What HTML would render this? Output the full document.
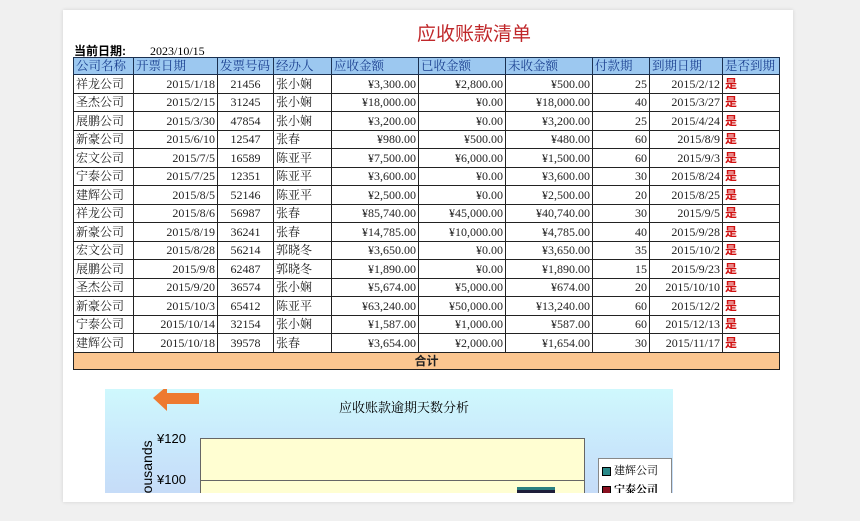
<!DOCTYPE html>
<html><head><meta charset="utf-8"><style>
body{margin:0;width:860px;height:521px;background:#f0f0f0;position:relative;overflow:hidden;font-family:"Liberation Serif","Noto Serif CJK SC",serif;}
.card{position:absolute;left:63px;top:10px;width:730px;height:492px;background:#fff;box-shadow:0 0 4px rgba(0,0,0,.12);}
.title{position:absolute;left:0;width:860px;top:19px;text-align:center;color:#c0282b;font-size:19px;font-family:"Liberation Sans","Noto Sans CJK SC",sans-serif;padding-left:88px;box-sizing:border-box;}
.date{position:absolute;left:74px;top:42px;font-size:12px;}
.date b{font-family:"Liberation Sans","Noto Sans CJK SC",sans-serif;}
table{position:absolute;left:73px;top:57px;border-collapse:collapse;table-layout:fixed;width:706px;font-size:12px;}
td{border:1px solid #222;padding:0 2px;height:17.5px;line-height:16px;white-space:nowrap;overflow:hidden;color:#222;}
tr.h td{background:#9cc8f0;color:#1a3f8f;height:16px;font-size:12.5px;border-color:#1a3050;}
.r{text-align:right}.c{text-align:center}
.y{color:#d01010;font-weight:bold;font-family:"Liberation Sans","Noto Sans CJK SC",sans-serif;}
tr.t td{background:#fbc690;text-align:center;font-weight:bold;font-family:"Liberation Sans","Noto Sans CJK SC",sans-serif;height:16px;}
.chart{position:absolute;left:105px;top:389px;width:568px;height:104px;background:linear-gradient(#cff8fd,#c8e6fb 60%,#c6dcf8);overflow:hidden;}
.plot{position:absolute;left:95px;top:49px;width:383px;height:70px;background:#fffed2;border:1px solid #666;}
.grid{position:absolute;left:0;right:0;top:41px;border-top:1px solid #666;}
.bar{position:absolute;left:316px;top:48px;width:38px;height:10px;background:#1e1e3a;border-top:3px solid #2a7f80;}
.ct{position:absolute;left:0;width:100%;top:8px;text-align:center;font-size:13px;padding-left:30px;box-sizing:border-box;}
.yl{position:absolute;font-family:"Liberation Sans",sans-serif;font-size:13px;left:52px;}
.leg{position:absolute;left:493px;top:69px;width:72px;height:40px;background:#fff;border:1px solid #888;font-size:11px;}
.sq{display:inline-block;width:7px;height:7px;border:1px solid #000;margin:0 3px 0 3px;vertical-align:middle}
</style></head><body>
<div class="card"></div>
<div class="title">应收账款清单</div>
<div class="date"><b>当前日期:</b>&nbsp;&nbsp;&nbsp;&nbsp;&nbsp;&nbsp;&nbsp;&nbsp;2023/10/15</div>
<table>
<colgroup><col style="width:60px"><col style="width:84px"><col style="width:56px"><col style="width:58px"><col style="width:87px"><col style="width:87px"><col style="width:87px"><col style="width:57px"><col style="width:73px"><col style="width:57px"></colgroup>
<tr class="h"><td>公司名称</td><td>开票日期</td><td>发票号码</td><td>经办人</td><td>应收金额</td><td>已收金额</td><td>未收金额</td><td>付款期</td><td>到期日期</td><td>是否到期</td></tr>
<tr><td>祥龙公司</td><td class="r">2015/1/18</td><td class="c">21456</td><td>张小娴</td><td class="r">¥3,300.00</td><td class="r">¥2,800.00</td><td class="r">¥500.00</td><td class="r">25</td><td class="r">2015/2/12</td><td class="y">是</td></tr>
<tr><td>圣杰公司</td><td class="r">2015/2/15</td><td class="c">31245</td><td>张小娴</td><td class="r">¥18,000.00</td><td class="r">¥0.00</td><td class="r">¥18,000.00</td><td class="r">40</td><td class="r">2015/3/27</td><td class="y">是</td></tr>
<tr><td>展鹏公司</td><td class="r">2015/3/30</td><td class="c">47854</td><td>张小娴</td><td class="r">¥3,200.00</td><td class="r">¥0.00</td><td class="r">¥3,200.00</td><td class="r">25</td><td class="r">2015/4/24</td><td class="y">是</td></tr>
<tr><td>新豪公司</td><td class="r">2015/6/10</td><td class="c">12547</td><td>张春</td><td class="r">¥980.00</td><td class="r">¥500.00</td><td class="r">¥480.00</td><td class="r">60</td><td class="r">2015/8/9</td><td class="y">是</td></tr>
<tr><td>宏文公司</td><td class="r">2015/7/5</td><td class="c">16589</td><td>陈亚平</td><td class="r">¥7,500.00</td><td class="r">¥6,000.00</td><td class="r">¥1,500.00</td><td class="r">60</td><td class="r">2015/9/3</td><td class="y">是</td></tr>
<tr><td>宁泰公司</td><td class="r">2015/7/25</td><td class="c">12351</td><td>陈亚平</td><td class="r">¥3,600.00</td><td class="r">¥0.00</td><td class="r">¥3,600.00</td><td class="r">30</td><td class="r">2015/8/24</td><td class="y">是</td></tr>
<tr><td>建辉公司</td><td class="r">2015/8/5</td><td class="c">52146</td><td>陈亚平</td><td class="r">¥2,500.00</td><td class="r">¥0.00</td><td class="r">¥2,500.00</td><td class="r">20</td><td class="r">2015/8/25</td><td class="y">是</td></tr>
<tr><td>祥龙公司</td><td class="r">2015/8/6</td><td class="c">56987</td><td>张春</td><td class="r">¥85,740.00</td><td class="r">¥45,000.00</td><td class="r">¥40,740.00</td><td class="r">30</td><td class="r">2015/9/5</td><td class="y">是</td></tr>
<tr><td>新豪公司</td><td class="r">2015/8/19</td><td class="c">36241</td><td>张春</td><td class="r">¥14,785.00</td><td class="r">¥10,000.00</td><td class="r">¥4,785.00</td><td class="r">40</td><td class="r">2015/9/28</td><td class="y">是</td></tr>
<tr><td>宏文公司</td><td class="r">2015/8/28</td><td class="c">56214</td><td>郭晓冬</td><td class="r">¥3,650.00</td><td class="r">¥0.00</td><td class="r">¥3,650.00</td><td class="r">35</td><td class="r">2015/10/2</td><td class="y">是</td></tr>
<tr><td>展鹏公司</td><td class="r">2015/9/8</td><td class="c">62487</td><td>郭晓冬</td><td class="r">¥1,890.00</td><td class="r">¥0.00</td><td class="r">¥1,890.00</td><td class="r">15</td><td class="r">2015/9/23</td><td class="y">是</td></tr>
<tr><td>圣杰公司</td><td class="r">2015/9/20</td><td class="c">36574</td><td>张小娴</td><td class="r">¥5,674.00</td><td class="r">¥5,000.00</td><td class="r">¥674.00</td><td class="r">20</td><td class="r">2015/10/10</td><td class="y">是</td></tr>
<tr><td>新豪公司</td><td class="r">2015/10/3</td><td class="c">65412</td><td>陈亚平</td><td class="r">¥63,240.00</td><td class="r">¥50,000.00</td><td class="r">¥13,240.00</td><td class="r">60</td><td class="r">2015/12/2</td><td class="y">是</td></tr>
<tr><td>宁泰公司</td><td class="r">2015/10/14</td><td class="c">32154</td><td>张小娴</td><td class="r">¥1,587.00</td><td class="r">¥1,000.00</td><td class="r">¥587.00</td><td class="r">60</td><td class="r">2015/12/13</td><td class="y">是</td></tr>
<tr><td>建辉公司</td><td class="r">2015/10/18</td><td class="c">39578</td><td>张春</td><td class="r">¥3,654.00</td><td class="r">¥2,000.00</td><td class="r">¥1,654.00</td><td class="r">30</td><td class="r">2015/11/17</td><td class="y">是</td></tr>
<tr class="t"><td colspan="10">合计</td></tr>
</table>
<div class="chart">
<svg style="position:absolute;left:46px;top:-4px" width="50" height="28"><polygon points="2,13 16,1 16,8 48,8 48,19 16,19 16,26" fill="#ee7a30"/></svg>
<div class="ct">应收账款逾期天数分析</div>
<div class="yl" style="top:42px">¥120</div>
<div class="yl" style="top:83px">¥100</div>
<div style="position:absolute;left:34px;top:116px;transform:rotate(-90deg);transform-origin:left top;font-family:'Liberation Sans',sans-serif;font-size:14px;">thousands</div>
<div class="plot"><div class="grid"></div><div class="bar"></div></div>
<div class="leg"><div style="margin-top:3px"><span class="sq" style="background:#2a8a8a"></span>建辉公司</div><div style="margin-top:3px"><span class="sq" style="background:#8a1020"></span><b>宁泰公司</b></div></div>
</div>
</body></html>
